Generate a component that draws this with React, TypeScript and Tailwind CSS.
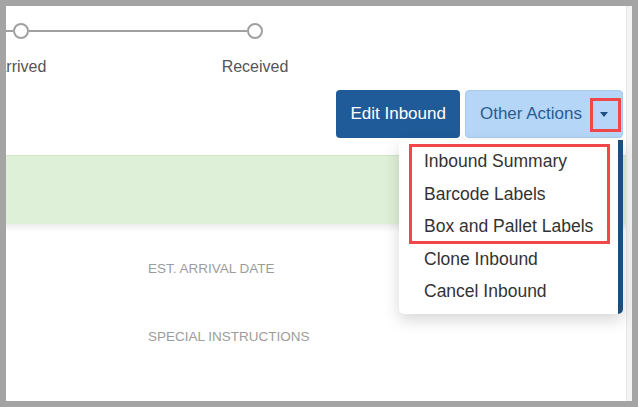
import { ReactNode } from "react";

const STEPS = ["Arrived", "Received"];

const MENU = [
  "Inbound Summary",
  "Barcode Labels",
  "Box and Pallet Labels",
  "Clone Inbound",
  "Cancel Inbound",
];

function Step({ label, last }: { label: string; last?: boolean }) {
  return (
    <div className="w-[234px] flex flex-col items-center shrink-0">
      <div className="flex items-center w-full">
        <div className="flex-1 h-[2px] bg-[#a0a0a0]" />
        <div className="w-[16px] h-[16px] rounded-full border-2 border-[#a0a0a0] bg-white shrink-0" />
        <div className={last ? "flex-1 h-[2px]" : "flex-1 h-[2px] bg-[#a0a0a0]"} />
      </div>
      <div className="mt-[19px] text-[16px] leading-[18px] text-[#555]">{label}</div>
    </div>
  );
}

function Field({ children, className }: { children: ReactNode; className?: string }) {
  return (
    <div className={"text-[13.5px] leading-[16px] text-[#9c9c9c] uppercase " + (className ?? "")}>
      {children}
    </div>
  );
}

export default function App() {
  return (
    <div className="w-[638px] h-[407px] bg-[#a4a4a4] p-[6px] font-['Liberation_Sans',Arial,sans-serif]">
      <div className="h-full bg-white overflow-hidden flex">
        <div className="flex-1 min-w-0">
          {/* stepper */}
          <div className="pt-[17px] flex -ml-[102px]">
            {STEPS.map((s, i) => (
              <Step key={s} label={s} last={i === STEPS.length - 1} />
            ))}
          </div>

          {/* actions */}
          <div className="mt-[14px] flex justify-end gap-[5px] pr-[3px] relative z-10">
            <button className="h-[48px] px-[14px] rounded-[4px] bg-[#1f5b98] text-white text-[17px]">
              Edit Inbound
            </button>
            <div className="relative">
              <button className="h-[48px] pl-[14px] pr-[14px] rounded-[4px] bg-[#b5d6f6] border border-[#a8cbef] text-[#2b5b92] text-[17px] flex items-center gap-[18px]">
                <span>Other Actions</span>
                <span className="w-0 h-0 border-l-[4px] border-r-[4px] border-t-[5px] border-l-transparent border-r-transparent border-t-[#1f4f85]" />
              </button>
              <div className="absolute top-[8px] right-[2px] w-[31px] h-[34px] border-[3px] border-[#f0474a]" />

              <div className="absolute top-[50px] right-0 w-[224px] bg-white border-r-[5px] border-[#1d4e7b] rounded-[5px] rounded-tr-none shadow-[0_6px_16px_rgba(0,0,0,0.16)] pt-[5px] pb-[6px]">
                {MENU.map((m) => (
                  <div key={m} className="pl-[25px] h-[32.5px] leading-[32.5px] text-[17.5px] text-[#333] whitespace-nowrap">
                    {m}
                  </div>
                ))}
                <div className="absolute left-[10px] top-[4px] w-[201px] h-[100px] border-[3px] border-[#f0474a]" />
              </div>
            </div>
          </div>

          {/* status band */}
          <div className="mt-[17px] h-[69px] bg-[#dff0d8] border-t border-[#d2e6c6]" />
          <div className="h-[8px] bg-linear-to-b from-[#ededed] to-white" />

          {/* details */}
          <div className="pl-[142px]">
            <Field className="mt-[29px]">Est. Arrival Date</Field>
            <Field className="mt-[52px]">Special Instructions</Field>
          </div>
        </div>
        <div className="w-[6px] bg-[#f3f3f3] border-l border-[#e8e8e8]" />
      </div>
    </div>
  );
}
